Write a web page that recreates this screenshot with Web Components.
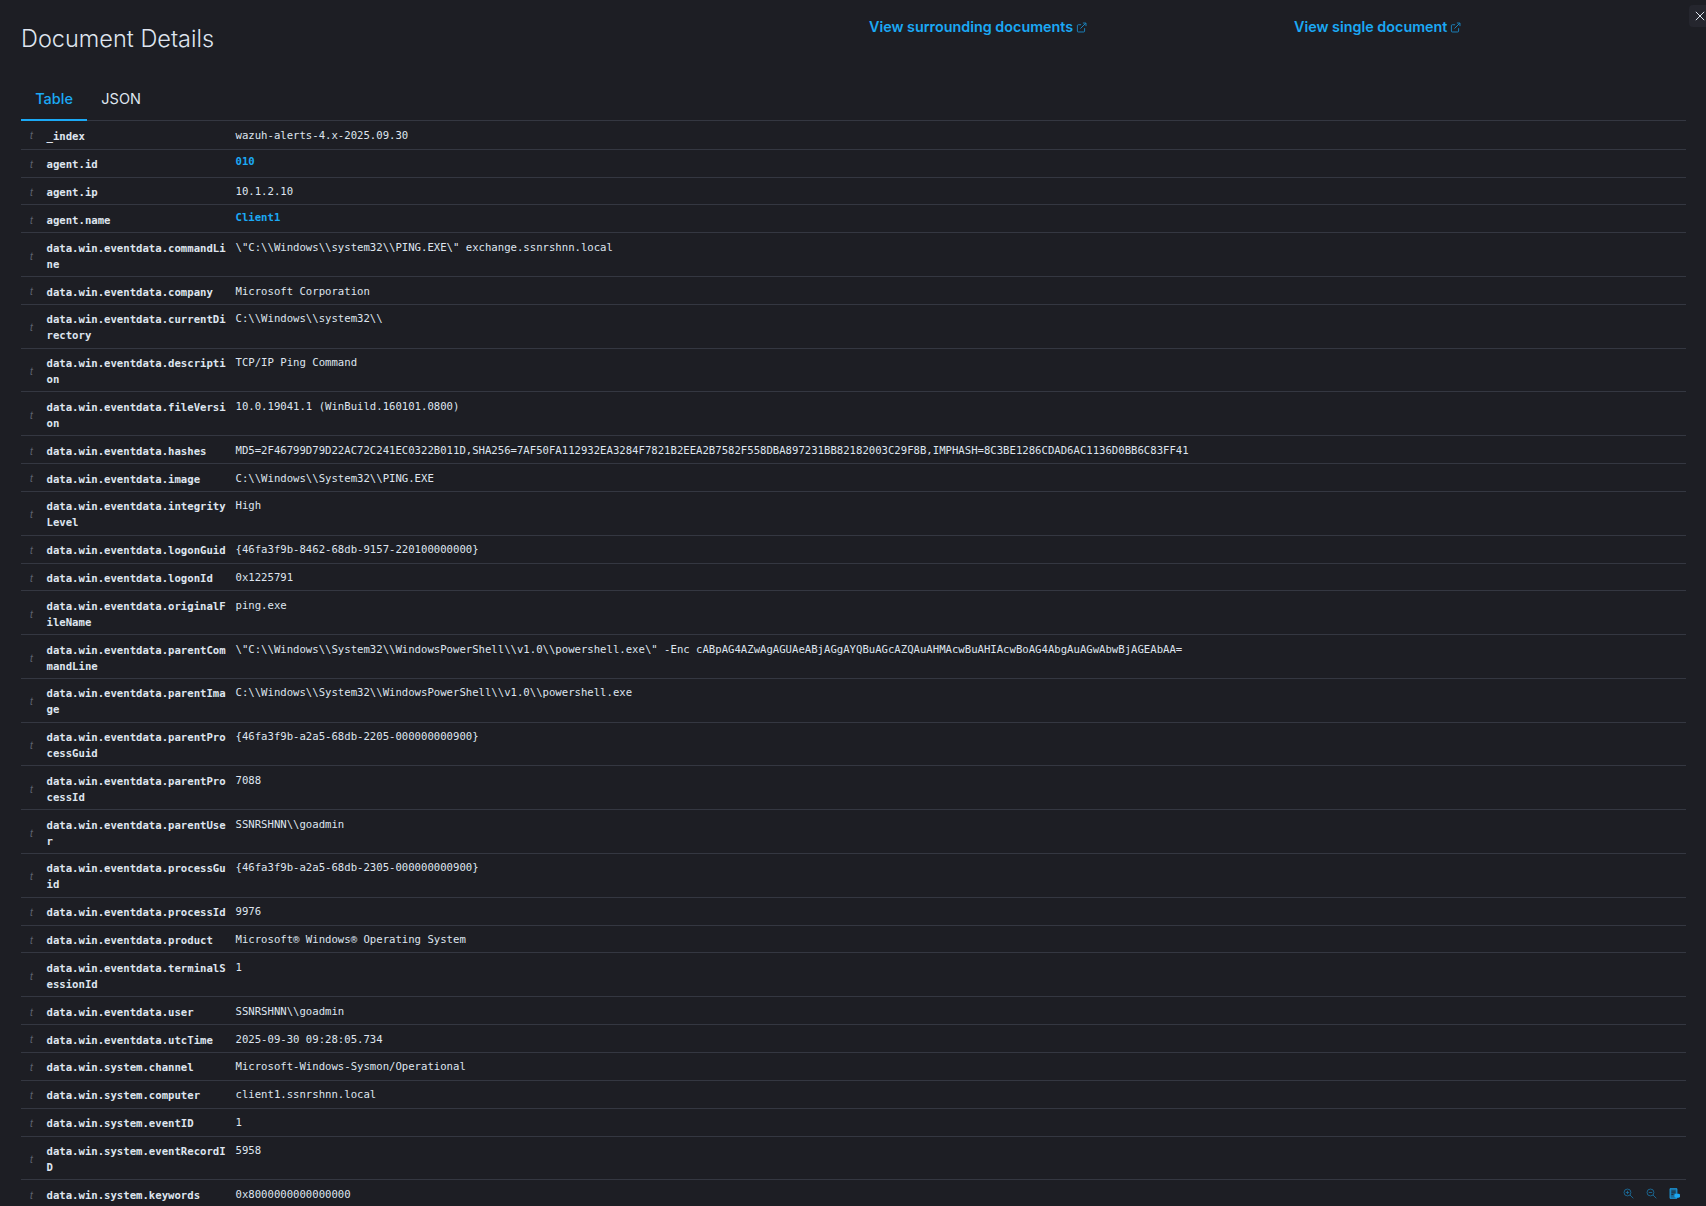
<!DOCTYPE html>
<html>
<head>
<meta charset="utf-8">
<title>Document Details</title>
<style>
  html, body { margin: 0; height: 100%; background: #1d1e24; overflow: hidden; }
  body { color: #dfe5ef; font-family: Inter, "Liberation Sans", sans-serif; }
</style>
</head>
<body>
<doc-flyout></doc-flyout>
<script>
const ROWS = [
  ['_index', 'wazuh-alerts-4.x-2025.09.30'],
  ['agent.id', '010', 'link'],
  ['agent.ip', '10.1.2.10'],
  ['agent.name', 'Client1', 'link'],
  ['data.win.eventdata.commandLine', '\\"C:\\\\Windows\\\\system32\\\\PING.EXE\\" exchange.ssnrshnn.local'],
  ['data.win.eventdata.company', 'Microsoft Corporation'],
  ['data.win.eventdata.currentDirectory', 'C:\\\\Windows\\\\system32\\\\'],
  ['data.win.eventdata.description', 'TCP/IP Ping Command'],
  ['data.win.eventdata.fileVersion', '10.0.19041.1 (WinBuild.160101.0800)'],
  ['data.win.eventdata.hashes', 'MD5=2F46799D79D22AC72C241EC0322B011D,SHA256=7AF50FA112932EA3284F7821B2EEA2B7582F558DBA897231BB82182003C29F8B,IMPHASH=8C3BE1286CDAD6AC1136D0BB6C83FF41'],
  ['data.win.eventdata.image', 'C:\\\\Windows\\\\System32\\\\PING.EXE'],
  ['data.win.eventdata.integrityLevel', 'High'],
  ['data.win.eventdata.logonGuid', '{46fa3f9b-8462-68db-9157-220100000000}'],
  ['data.win.eventdata.logonId', '0x1225791'],
  ['data.win.eventdata.originalFileName', 'ping.exe'],
  ['data.win.eventdata.parentCommandLine', '\\"C:\\\\Windows\\\\System32\\\\WindowsPowerShell\\\\v1.0\\\\powershell.exe\\" -Enc cABpAG4AZwAgAGUAeABjAGgAYQBuAGcAZQAuAHMAcwBuAHIAcwBoAG4AbgAuAGwAbwBjAGEAbAA='],
  ['data.win.eventdata.parentImage', 'C:\\\\Windows\\\\System32\\\\WindowsPowerShell\\\\v1.0\\\\powershell.exe'],
  ['data.win.eventdata.parentProcessGuid', '{46fa3f9b-a2a5-68db-2205-000000000900}'],
  ['data.win.eventdata.parentProcessId', '7088'],
  ['data.win.eventdata.parentUser', 'SSNRSHNN\\\\goadmin'],
  ['data.win.eventdata.processGuid', '{46fa3f9b-a2a5-68db-2305-000000000900}'],
  ['data.win.eventdata.processId', '9976'],
  ['data.win.eventdata.product', 'Microsoft® Windows® Operating System'],
  ['data.win.eventdata.terminalSessionId', '1'],
  ['data.win.eventdata.user', 'SSNRSHNN\\\\goadmin'],
  ['data.win.eventdata.utcTime', '2025-09-30 09:28:05.734'],
  ['data.win.system.channel', 'Microsoft-Windows-Sysmon/Operational'],
  ['data.win.system.computer', 'client1.ssnrshnn.local'],
  ['data.win.system.eventID', '1'],
  ['data.win.system.eventRecordID', '5958'],
  ['data.win.system.keywords', '0x8000000000000000', 'actions']
];

class DocLink extends HTMLElement {
  constructor() {
    super();
    this.attachShadow({ mode: 'open' });
    this.shadowRoot.innerHTML = `
      <style>
        :host { display: inline-flex; align-items: center; gap: 3px; color: #1ba9f5; font-size: 14.35px; font-weight: 600; line-height: 20px; white-space: nowrap; }
        svg { width: 11px; height: 11px; margin-top: 1px; }
      </style>
      <slot></slot>
      <svg viewBox="0 0 16 16" fill="none" stroke="currentColor" stroke-width="1.3" opacity=".8">
        <path d="M12.5 9v4.2a1.3 1.3 0 0 1-1.3 1.3H3.3A1.3 1.3 0 0 1 2 13.2V5.3A1.3 1.3 0 0 1 3.3 4h4.2"/>
        <path d="M6.5 9.5 14 2M10 1.5h4.5V6"/>
      </svg>
    `;
  }
}
customElements.define('doc-link', DocLink);

class DocRow extends HTMLElement {
  constructor() {
    super();
    this.attachShadow({ mode: 'open' });
  }

  connectedCallback() {
    const actions = this.hasAttribute('actions') ? `
      <div class="actions">
        <svg viewBox="0 0 16 16"><circle cx="6.5" cy="6.5" r="5"/><path d="M10.2 10.2 15 15M6.5 4v5M4 6.5h5"/></svg>
        <svg viewBox="0 0 16 16"><circle cx="6.5" cy="6.5" r="5"/><path d="M10.2 10.2 15 15M4 6.5h5"/></svg>
        <svg viewBox="0 0 16 16" class="cols"><path d="M1.5 1h10v14h-10z" fill="#1ba9f5" fill-opacity=".55"/><path d="M3.5 4.5h6M3.5 7h6M3.5 9.5h3" stroke="#1d1e24"/><rect x="8" y="8.5" width="8" height="5.5" rx="2" fill="#1ba9f5" stroke="none"/></svg>
      </div>` : '';
    this.shadowRoot.innerHTML = `
      <style>
        :host { display: flex; position: relative; border-bottom: 1px solid #343741; font: 10.63px/15.87px "DejaVu Sans Mono", "Liberation Mono", monospace; }
        :host([first]) { padding-bottom: .8px; }
        .type { flex: none; width: 21px; margin-right: 4.5px; padding-top: 3px; box-sizing: border-box; display: flex; align-items: center; justify-content: center; color: #5f6470; font: italic 10px "Liberation Sans", sans-serif; }
        .key { flex: none; width: 184px; margin-right: 5px; padding: 7.5px 0 3.5px; font-weight: 600; word-break: break-all; }
        .value { flex: 1; padding: 6.5px 0 4.5px; white-space: pre-wrap; }
        :host([link]) .value { padding: 4.5px 0 6.5px; color: #1ba9f5; font-weight: 600; }
        .actions { position: absolute; right: 6px; top: 8px; display: flex; gap: 12px; }
        svg { width: 11px; height: 11px; fill: none; stroke: #1ba9f5; stroke-width: 1.2; opacity: .6; }
        svg.cols { opacity: 1; }
      </style>
      <div class="type">t</div>
      <div class="key"><slot name="key"></slot></div>
      <div class="value"><slot></slot></div>
      ${actions}
    `;
  }
}
customElements.define('doc-row', DocRow);

class DocFlyout extends HTMLElement {
  constructor() {
    super();
    this.attachShadow({ mode: 'open' });
  }

  connectedCallback() {
    this.shadowRoot.innerHTML = `
      <style>
        :host { display: block; position: relative; height: 1206px; overflow: hidden; padding: 0 20px 0 21px; box-sizing: border-box; background: #1d1e24; }
        header { display: flex; height: 80px; }
        h2 { margin: 27px 0 0; width: 848px; font-size: 23.5px; font-weight: 300; line-height: 24px; color: #dfe5ef; }
        .links { display: flex; padding-top: 17px; height: 20px; }
        .links doc-link:first-child { width: 425px; }
        nav { display: flex; height: 40px; border-bottom: 1px solid #343741; }
        nav span { padding: 9px 14.2px 0; font-size: 14.5px; line-height: 20px; color: #dfe5ef; box-sizing: border-box; }
        nav span.on { color: #1ba9f5; font-weight: 500; border-bottom: 2px solid #1ba9f5; height: 41px; }
        .close { position: absolute; top: 5px; right: 0; width: 17px; height: 22px; padding-left: 6px; box-sizing: border-box; background: #25262e; border-radius: 4px 0 0 4px; display: flex; align-items: center; }
        .close svg { width: 10px; height: 10px; flex: none; stroke: #dfe5ef; stroke-width: 1.2; fill: none; }
      </style>
      <div class="close"><svg viewBox="0 0 12 12"><path d="M1 1l10 10M11 1 1 11"/></svg></div>
      <header>
        <h2>Document Details</h2>
        <div class="links">
          <doc-link>View surrounding documents</doc-link>
          <doc-link>View single document</doc-link>
        </div>
      </header>
      <nav><span class="on">Table</span><span>JSON</span></nav>
      <section id="rows"></section>
    `;
    const rows = this.shadowRoot.getElementById('rows');
    ROWS.forEach(([key, value, flag], i) => {
      const row = document.createElement('doc-row');
      if (flag) row.setAttribute(flag, '');
      if (i === 0) row.setAttribute('first', '');
      const k = document.createElement('span');
      k.slot = 'key';
      k.textContent = key;
      row.append(k, value);
      rows.append(row);
    });
  }
}
customElements.define('doc-flyout', DocFlyout);
</script>
</body>
</html>
